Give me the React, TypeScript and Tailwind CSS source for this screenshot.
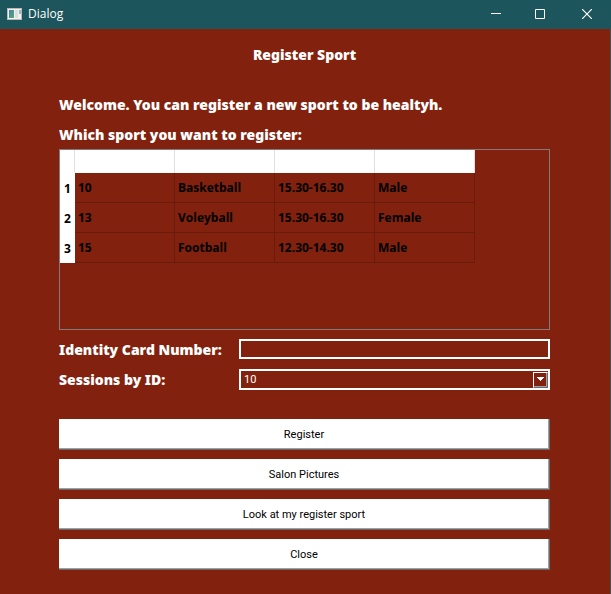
import { useState } from "react";

const sports = [
  { id: "10", name: "Basketball", hours: "15.30-16.30", gender: "Male" },
  { id: "13", name: "Voleyball", hours: "15.30-16.30", gender: "Female" },
  { id: "15", name: "Football", hours: "12.30-14.30", gender: "Male" },
];

const actions = ["Register", "Salon Pictures", "Look at my register sport", "Close"];

const heading = "font-['Noto_Sans',sans-serif] text-[14px] leading-[30px] font-black text-white";
const small = "font-['Roboto',sans-serif] text-[11px]";
const cell = "h-[30px] border-r border-b border-[#6a1c0c] p-0 pl-[3px] text-left align-middle";

function TitleBar() {
  return (
    <header className="flex h-[29px] items-start bg-[#1d555c] text-white">
      <div className="flex h-[27px] grow items-center gap-[6px] pl-[7px]">
        <svg width="15" height="12" viewBox="0 0 15 12" aria-hidden="true">
          <defs>
            <linearGradient id="pane" x1="0" y1="0" x2="1" y2="1">
              <stop offset="0" stopColor="#487fa8" />
              <stop offset="1" stopColor="#55aa70" />
            </linearGradient>
          </defs>
          <path d="M0 0h15v12H0z" fill="#b9b9b9" />
          <path d="M1 1h13v10H1z" fill="#f1f1f1" />
          <path d="M2 2h5v8H2z" fill="url(#pane)" />
          <path d="M8 2h3v8H8z" fill="#dedede" />
          <path d="M12 2h2v4h-2z" fill="#91bcc2" />
        </svg>
        <h1 className="font-['Open_Sans',sans-serif] text-[12px] leading-4">Dialog</h1>
      </div>
      <button aria-label="Minimize" className="flex h-[27px] w-[43px] items-center justify-center">
        <svg width="10" height="11" viewBox="0 0 10 11" stroke="currentColor" aria-hidden="true">
          <path d="M0 5.5h10" />
        </svg>
      </button>
      <button aria-label="Maximize" className="flex h-[27px] w-[46px] items-center justify-center">
        <svg width="10" height="10" viewBox="0 0 10 10" fill="none" stroke="currentColor" aria-hidden="true">
          <path d="M.5.5h9v9h-9z" />
        </svg>
      </button>
      <button aria-label="Close window" className="flex h-[27px] w-[48px] items-center justify-center">
        <svg width="10" height="10" viewBox="0 0 10 10" fill="none" stroke="currentColor" strokeWidth="1.2" aria-hidden="true">
          <path d="M0 0l10 10M10 0L0 10" />
        </svg>
      </button>
    </header>
  );
}

function SportTable() {
  return (
    <div className="h-[181px] overflow-auto border border-[#85797c]">
      <table
        aria-label="Sports"
        className="w-[415px] table-fixed border-separate border-spacing-0 font-['Open_Sans',sans-serif] text-[12px] leading-4 font-bold text-black"
      >
        <colgroup>
          <col className="w-[15px]" />
          <col />
          <col />
          <col />
          <col />
        </colgroup>
        <thead>
          <tr>
            {[0, 1, 2, 3, 4].map((n) => (
              <th key={n} className="h-[23px] border-r border-[#e0e0e0] bg-white p-0" />
            ))}
          </tr>
        </thead>
        <tbody>
          {sports.map((sport, index) => (
            <tr key={sport.id}>
              <th scope="row" className="bg-white p-0 pt-[2px] text-center align-middle">
                {index + 1}
              </th>
              <td className={cell}>{sport.id}</td>
              <td className={cell}>{sport.name}</td>
              <td className={cell}>{sport.hours}</td>
              <td className={cell}>{sport.gender}</td>
            </tr>
          ))}
        </tbody>
      </table>
    </div>
  );
}

export default function App() {
  const [card, setCard] = useState("");
  const [session, setSession] = useState("10");

  return (
    <div className="flex min-h-screen flex-col bg-[#82220e]">
      <TitleBar />
      <main className="grow border-r border-[#3d5558] pt-[11px] pr-[60px] pb-6 pl-[59px]">
        <h2 className={`${heading} text-center`}>Register Sport</h2>
        <p className={`${heading} mt-5`}>Welcome. You can register a new sport to be healtyh.</p>
        <p className={`${heading} -mb-px`}>Which sport you want to register:</p>
        <SportTable />

        <form className="mt-[5px] grid grid-cols-[180px_1fr] items-start" onSubmit={(e) => e.preventDefault()}>
          <label htmlFor="card" className={heading}>
            Identity Card Number:
          </label>
          <input
            id="card"
            value={card}
            onChange={(e) => setCard(e.target.value)}
            className={`${small} mt-1 h-5 w-full border-2 border-white bg-transparent px-[2px] text-white outline-none`}
          />
          <label htmlFor="session" className={heading}>
            Sessions by ID:
          </label>
          <div className="relative mt-1">
            <select
              id="session"
              value={session}
              onChange={(e) => setSession(e.target.value)}
              className={`${small} block h-[21px] w-full appearance-none border-2 border-white bg-[#82220e] px-[3px] pt-px text-white outline-none`}
            >
              {sports.map((sport) => (
                <option key={sport.id}>{sport.id}</option>
              ))}
            </select>
            <span className="pointer-events-none absolute top-[3px] right-[2px] flex h-4 w-[15px] justify-center border border-t-white border-r-[#696969] border-b-[#696969] border-l-white pt-1 shadow-[inset_-1px_-1px_0_#a0a0a0]">
              <svg width="7" height="4" viewBox="0 0 7 4" fill="white" shapeRendering="crispEdges" aria-hidden="true">
                <path d="M0 0h7v1H6v1H5v1H4v1H3V3H2V2H1V1H0z" />
              </svg>
            </span>
          </div>
        </form>

        <div className="mt-6 flex flex-col gap-[9px]">
          {actions.map((action) => (
            <button
              key={action}
              type="button"
              className={`${small} h-[31px] border-r border-b border-[#696969] bg-white pt-[2px] text-black shadow-[inset_-1px_-1px_0_#a0a0a0]`}
            >
              {action}
            </button>
          ))}
        </div>
      </main>
    </div>
  );
}
